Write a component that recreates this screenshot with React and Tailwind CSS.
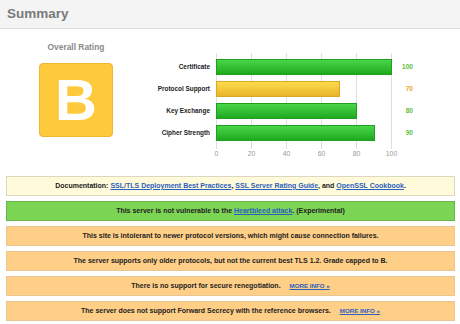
import React from "react";

const FONT = { fontFamily: '"Liberation Sans", Arial, sans-serif' };

const rows = [
  { label: "Certificate", value: 100, tone: "green" },
  { label: "Protocol Support", value: 70, tone: "yellow" },
  { label: "Key Exchange", value: 80, tone: "green" },
  { label: "Cipher Strength", value: 90, tone: "green" },
];

const SCALE = 175;

const MoreInfo = () => (
  <a className="ml-[7px] text-[6.2px] font-bold uppercase text-[#2b5fc0] underline">More info »</a>
);

const Notice = ({ className, children }) => (
  <div className={`mx-[6px] mr-[5px] mb-[5px] flex h-[20px] items-center justify-center border text-[7px] font-bold text-[#222] ${className}`}>
    <span>{children}</span>
  </div>
);

const Chart = () => (
  <div className="pt-[24px]">
    <div className="flex">
      <div className="flex w-[60px] flex-col pt-[6px]">
        {rows.map((row) => (
          <div key={row.label} className="flex h-[22px] items-start justify-end">
            <span className="flex h-[16px] items-center whitespace-nowrap text-[6.4px] font-bold text-[#222]">
              {row.label}
            </span>
          </div>
        ))}
      </div>
      <div className="relative ml-[6px] w-[176px] pt-[6px] pb-[2px]">
        {[0, 20, 40, 60, 80, 100].map((tick) => (
          <div
            key={tick}
            className="absolute top-0 bottom-0 w-px bg-[#dedede]"
            style={{ left: (tick / 100) * SCALE }}
          />
        ))}
        {rows.map((row) => (
          <div key={row.label} className="relative flex h-[22px] items-start">
            <div
              className={`h-[16px] border ${
                row.tone === "green"
                  ? "border-[#1f9e1f] bg-gradient-to-b from-[#48d748] to-[#1ea91e]"
                  : "border-[#d9a824] bg-gradient-to-b from-[#fddb4c] to-[#e8b428]"
              }`}
              style={{ width: (row.value / 100) * SCALE + 1 }}
            />
          </div>
        ))}
      </div>
      <div className="flex w-[21px] flex-col pt-[6px]">
        {rows.map((row) => (
          <div key={row.label} className="flex h-[22px] items-start justify-end">
            <span
              className={`flex h-[16px] items-center text-[6.6px] font-bold ${
                row.tone === "green" ? "text-[#62bd45]" : "text-[#ef9f2c]"
              }`}
            >
              {row.value}
            </span>
          </div>
        ))}
      </div>
    </div>
    <div className="relative ml-[66px] h-[10px] w-[176px]">
      {[0, 20, 40, 60, 80, 100].map((tick) => (
        <span
          key={tick}
          className="absolute top-0 -translate-x-1/2 text-[6.8px] leading-[10px] text-[#999]"
          style={{ left: (tick / 100) * SCALE + 0.5 }}
        >
          {tick}
        </span>
      ))}
    </div>
  </div>
);

export default function App() {
  return (
    <div className="h-[324px] w-[460px] overflow-hidden bg-white" style={FONT}>
      <div className="flex h-[29px] items-center border-b border-[#dddddd] bg-[#f4f4f4] pl-[7px]">
        <span className="text-[13.5px] font-bold text-[#7a7a7a]">Summary</span>
      </div>
      <div className="flex h-[147px]">
        <div className="flex w-[150px] flex-col items-center pl-[2px] pt-[13px]">
          <span className="text-[8.4px] font-bold leading-[10px] text-[#8a8a8a]">Overall Rating</span>
          <div className="mt-[11px] flex h-[74px] w-[74px] items-center justify-center rounded-[4px] border border-[#efb52c] bg-[#fec93a]">
            <span className="text-[58px] font-bold leading-none text-white">B</span>
          </div>
        </div>
        <Chart />
      </div>
      <Notice className="border-[#dcd8bf] bg-[#fffad9]">
        Documentation:{" "}
        <a className="text-[#2b5fc0] underline">SSL/TLS Deployment Best Practices</a>,{" "}
        <a className="text-[#2b5fc0] underline">SSL Server Rating Guide</a>, and{" "}
        <a className="text-[#2b5fc0] underline">OpenSSL Cookbook</a>.
      </Notice>
      <Notice className="border-[#67b448] bg-[#7cd455]">
        This server is not vulnerable to the <a className="text-[#2b5fc0] underline">Heartbleed attack</a>. (Experimental)
      </Notice>
      <Notice className="border-[#e8c691] bg-[#ffcf87]">
        This site is intolerant to newer protocol versions, which might cause connection failures.
      </Notice>
      <Notice className="border-[#e8c691] bg-[#ffcf87]">
        The server supports only older protocols, but not the current best TLS 1.2. Grade capped to B.
      </Notice>
      <Notice className="border-[#e8c691] bg-[#ffcf87]">
        There is no support for secure renegotiation. <MoreInfo />
      </Notice>
      <Notice className="border-[#e8c691] bg-[#ffcf87]">
        The server does not support Forward Secrecy with the reference browsers. <MoreInfo />
      </Notice>
    </div>
  );
}
